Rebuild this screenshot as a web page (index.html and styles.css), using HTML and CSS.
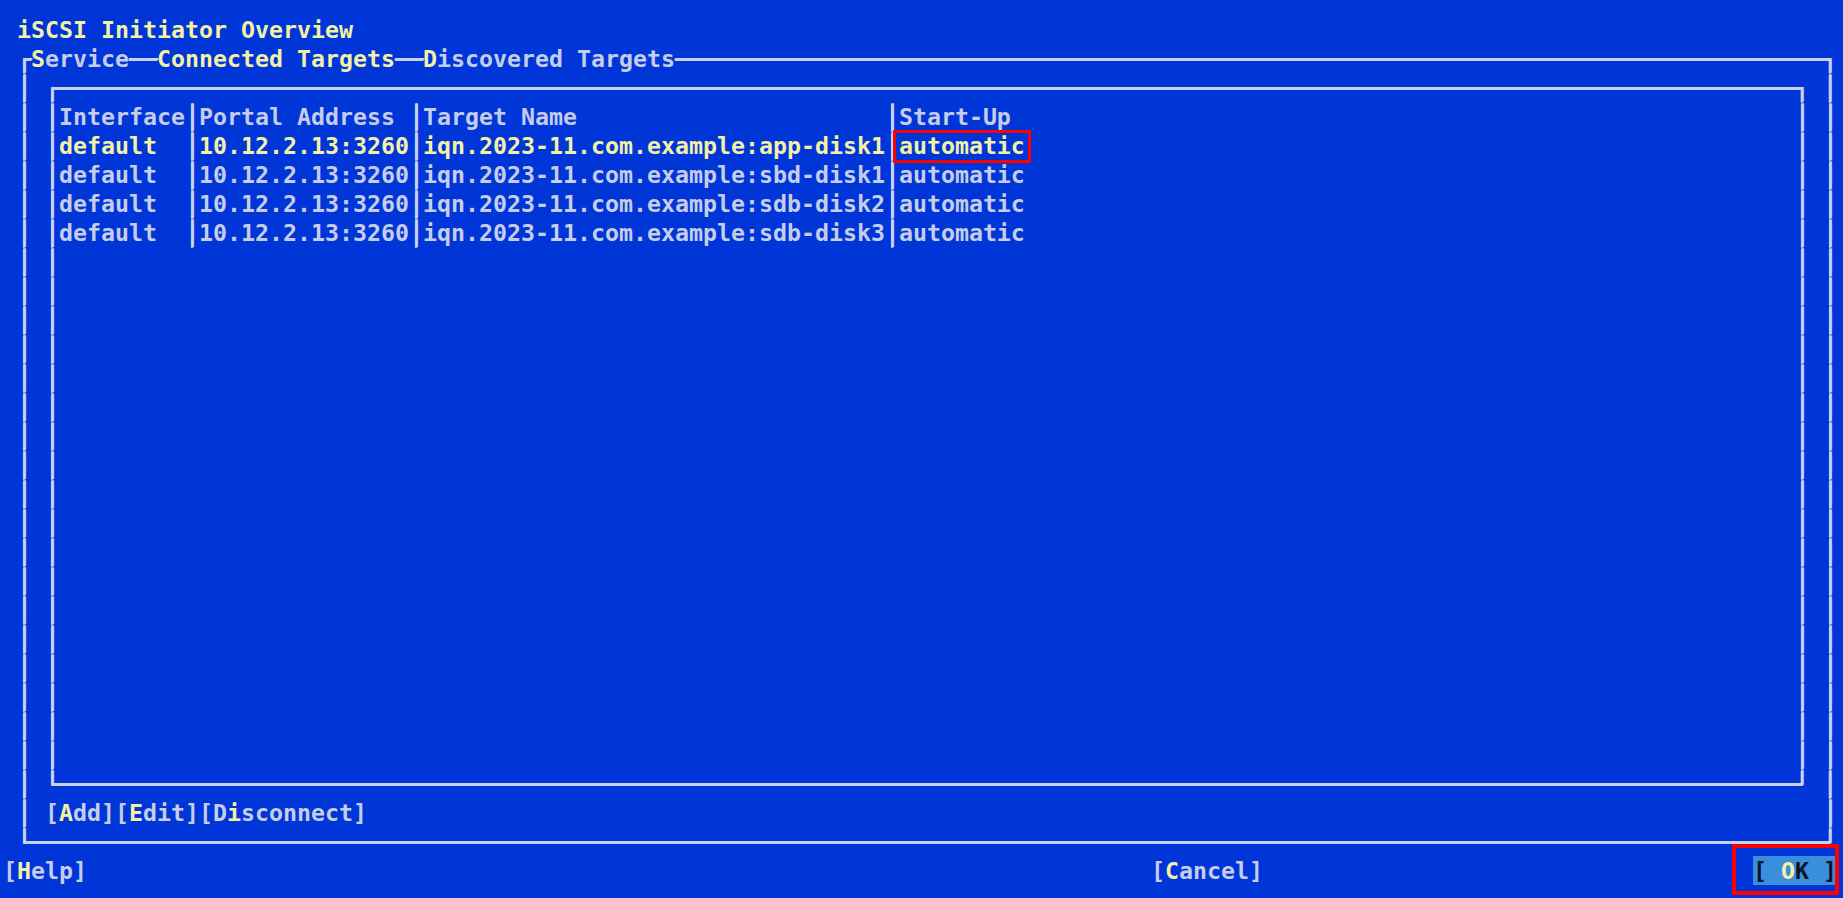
FILE: index.html
```html
<!DOCTYPE html>
<html>
<head>
<meta charset="utf-8">
<title>iSCSI Initiator Overview</title>
<link rel="stylesheet" href="styles.css">
</head>
<body>
<div class="screen">
  <div class="row"><span> </span><span class="y">iSCSI Initiator Overview</span></div>
  <div class="row"><span class="ln"> ┌</span><span class="hk">S</span><span>ervice</span><span class="ln">──</span><span class="y">Connected Targets</span><span class="ln">──</span><span class="hk">D</span><span>iscovered Targets</span><span class="ln">──────────────────────────────────────────────────────────────────────────────────┐</span></div>
  <div class="row"><span class="ln"> │ ┌────────────────────────────────────────────────────────────────────────────────────────────────────────────────────────────┐ │</span></div>
  <div class="row"><span class="ln"> │ │</span><span>Interface</span><span class="ln">│</span><span>Portal Address </span><span class="ln">│</span><span>Target Name                      </span><span class="ln">│</span><span>Start-Up</span><span class="fill"></span><span class="ln">│ │</span></div>
  <div class="row"><span class="ln"> │ │</span><span class="y">default  </span><span class="ln">│</span><span class="y">10.12.2.13:3260</span><span class="ln">│</span><span class="y">iqn.2023-11.com.example:app-disk1</span><span class="ln">│</span><span class="y">automatic</span><span class="fill"></span><span class="ln">│ │</span></div>
  <div class="row"><span class="ln"> │ │</span><span>default  </span><span class="ln">│</span><span>10.12.2.13:3260</span><span class="ln">│</span><span>iqn.2023-11.com.example:sbd-disk1</span><span class="ln">│</span><span>automatic</span><span class="fill"></span><span class="ln">│ │</span></div>
  <div class="row"><span class="ln"> │ │</span><span>default  </span><span class="ln">│</span><span>10.12.2.13:3260</span><span class="ln">│</span><span>iqn.2023-11.com.example:sdb-disk2</span><span class="ln">│</span><span>automatic</span><span class="fill"></span><span class="ln">│ │</span></div>
  <div class="row"><span class="ln"> │ │</span><span>default  </span><span class="ln">│</span><span>10.12.2.13:3260</span><span class="ln">│</span><span>iqn.2023-11.com.example:sdb-disk3</span><span class="ln">│</span><span>automatic</span><span class="fill"></span><span class="ln">│ │</span></div>
  <div class="row"><span class="ln"> │ │</span><span class="fill"></span><span class="ln">│ │</span></div>
  <div class="row"><span class="ln"> │ │</span><span class="fill"></span><span class="ln">│ │</span></div>
  <div class="row"><span class="ln"> │ │</span><span class="fill"></span><span class="ln">│ │</span></div>
  <div class="row"><span class="ln"> │ │</span><span class="fill"></span><span class="ln">│ │</span></div>
  <div class="row"><span class="ln"> │ │</span><span class="fill"></span><span class="ln">│ │</span></div>
  <div class="row"><span class="ln"> │ │</span><span class="fill"></span><span class="ln">│ │</span></div>
  <div class="row"><span class="ln"> │ │</span><span class="fill"></span><span class="ln">│ │</span></div>
  <div class="row"><span class="ln"> │ │</span><span class="fill"></span><span class="ln">│ │</span></div>
  <div class="row"><span class="ln"> │ │</span><span class="fill"></span><span class="ln">│ │</span></div>
  <div class="row"><span class="ln"> │ │</span><span class="fill"></span><span class="ln">│ │</span></div>
  <div class="row"><span class="ln"> │ │</span><span class="fill"></span><span class="ln">│ │</span></div>
  <div class="row"><span class="ln"> │ │</span><span class="fill"></span><span class="ln">│ │</span></div>
  <div class="row"><span class="ln"> │ │</span><span class="fill"></span><span class="ln">│ │</span></div>
  <div class="row"><span class="ln"> │ │</span><span class="fill"></span><span class="ln">│ │</span></div>
  <div class="row"><span class="ln"> │ │</span><span class="fill"></span><span class="ln">│ │</span></div>
  <div class="row"><span class="ln"> │ │</span><span class="fill"></span><span class="ln">│ │</span></div>
  <div class="row"><span class="ln"> │ │</span><span class="fill"></span><span class="ln">│ │</span></div>
  <div class="row"><span class="ln"> │ │</span><span class="fill"></span><span class="ln">│ │</span></div>
  <div class="row"><span class="ln"> │ └────────────────────────────────────────────────────────────────────────────────────────────────────────────────────────────┘ │</span></div>
  <div class="row"><span class="ln"> │ </span><span>[</span><span class="hk">A</span><span>dd][</span><span class="hk">E</span><span>dit][D</span><span class="hk">i</span><span>sconnect]</span><span class="fill"></span><span class="ln">│</span></div>
  <div class="row"><span class="ln"> └────────────────────────────────────────────────────────────────────────────────────────────────────────────────────────────────┘</span></div>
  <div class="row"><span>[</span><span class="hk">H</span><span>elp]</span><span class="fill"></span><span>[</span><span class="hk">C</span><span>ancel]</span><span class="gap35"></span><span class="okbtn"><span>[ </span><span class="hk">O</span><span>K ]</span></span></div>

  <div class="mark mark-cell"></div>
  <div class="mark mark-ok"></div>
</div>
</body>
</html>
```

FILE: styles.css
```css
html, body {
  margin: 0;
  padding: 0;
  background: #0036d8;
  overflow: hidden;
}

.screen {
  position: relative;
  width: 1843px;
  height: 898px;
  box-sizing: border-box;
  padding: 15px 0 0 3px;
  background: #0036d8;
  color: #c6cdea;
  font-family: "DejaVu Sans Mono", "Liberation Mono", monospace;
  font-size: 23.25px;
  font-weight: bold;
}

.row {
  display: flex;
  width: 1834px;
  height: 29px;
  line-height: 29px;
  white-space: pre;
}

.row > span {
  flex: none;
}

.row > .fill {
  flex: 1 1 0;
  min-width: 0;
}

.ln {
  color: #cad1ee;
  text-shadow: 1px 0 0 #cad1ee, 0 1px 0 #cad1ee;
}

.gap35 {
  width: 490px;
}

.y {
  color: #f4f0a6;
}

.hk {
  color: #f4f0a6;
}

.okbtn {
  display: flex;
  background: #3a8fdc;
  color: #0b1424;
}

.okbtn .hk {
  color: #f4f0a6;
}

.mark {
  position: absolute;
  box-sizing: border-box;
  border: 3px solid #ff0000;
}

.mark-cell {
  left: 893px;
  top: 130px;
  width: 138px;
  height: 33px;
}

.mark-ok {
  left: 1732px;
  top: 844px;
  width: 107px;
  height: 51px;
  border-width: 4px;
}
```
